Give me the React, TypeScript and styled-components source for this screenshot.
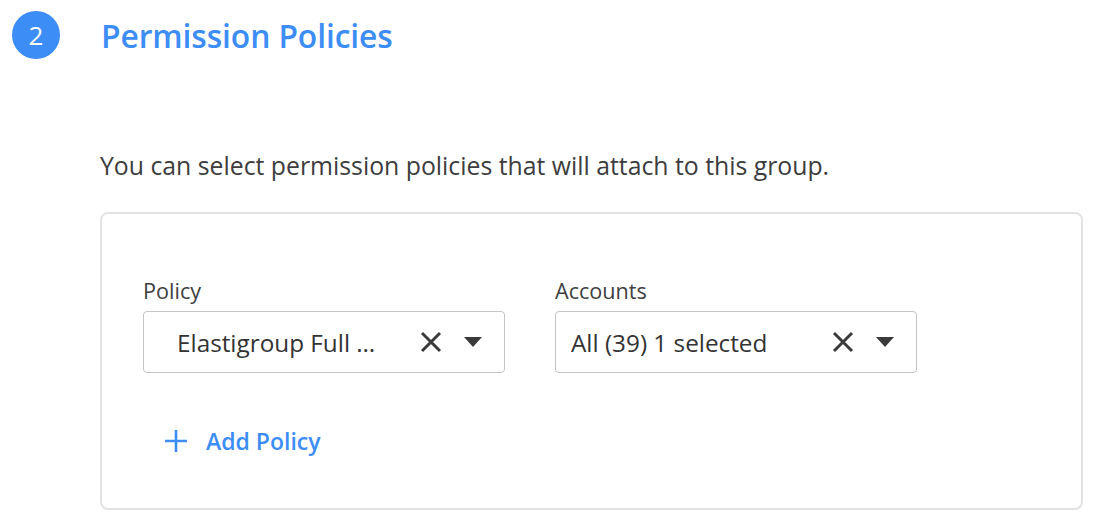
import * as React from 'react';
import styled, { createGlobalStyle } from 'styled-components';

const GlobalStyle = createGlobalStyle`
  html, body {
    margin: 0;
    padding: 0;
    background: #ffffff;
  }

  body {
    font-family: "Open Sans", Lato, "Liberation Sans", sans-serif;
    color: #3a3a3a;
  }
`;

const Page = styled.div`
  width: 1094px;
  height: 522px;
  overflow: hidden;
  box-sizing: border-box;
  padding: 11px 0 0 12px;
`;

const StepHeader = styled.div`
  display: flex;
  align-items: center;
  gap: 41px;
  height: 48px;
`;

const StepBadge = styled.div`
  width: 48px;
  height: 48px;
  border-radius: 50%;
  background-color: #3c8df5;
  color: #ffffff;
  display: flex;
  align-items: center;
  justify-content: center;
  font-size: 26px;
  font-weight: 400;
`;

const StepTitle = styled.h2`
  margin: 0;
  color: #3c8df5;
  font-size: 31.8px;
  font-weight: 600;
  letter-spacing: -0.1px;
`;

const StepBody = styled.div`
  margin-left: 88px;
`;

const Description = styled.p`
  margin: 90px 0 0;
  font-size: 24.8px;
  line-height: 32px;
  color: #3d3d3d;
`;

const Card = styled.div`
  margin-top: 31px;
  width: 983px;
  height: 298px;
  box-sizing: border-box;
  border: 2px solid #e3e3e3;
  border-radius: 8px;
  padding: 64px 0 0 41px;
`;

const FieldRow = styled.div`
  display: flex;
  gap: 50px;
`;

const Field = styled.div`
  display: flex;
  flex-direction: column;
  width: 362px;
`;

const FieldLabel = styled.label`
  font-size: 21.6px;
  line-height: 26px;
  color: #404040;
  margin-bottom: 7px;
`;

const SelectBox = styled.div<{ $inset: number }>`
  height: 62px;
  box-sizing: border-box;
  border: 1.5px solid #c4c4c4;
  border-radius: 4px;
  display: flex;
  align-items: center;
  padding: 0 21px 0 ${({ $inset }) => $inset}px;
`;

const SelectValue = styled.span`
  flex: 1;
  font-size: 24.3px;
  color: #333333;
  white-space: nowrap;
  overflow: hidden;
`;

const IconButton = styled.span<{ $gap: number }>`
  display: flex;
  align-items: center;
  justify-content: center;
  margin-left: ${({ $gap }) => $gap}px;
`;

const AddButton = styled.button`
  margin: 52px 0 0 22px;
  padding: 0;
  border: none;
  background: none;
  display: flex;
  align-items: center;
  gap: 19px;
  color: #3c8df5;
  font-family: inherit;
  font-size: 23px;
  font-weight: 600;
  cursor: pointer;
`;

const ClearIcon = () => (
  <svg width="22" height="22" viewBox="0 0 22 22">
    <path d="M2 2 L20 20 M20 2 L2 20" stroke="#3a3a3a" strokeWidth="3" strokeLinecap="butt" />
  </svg>
);

const CaretIcon = () => (
  <svg width="20" height="10" viewBox="0 0 20 10">
    <path d="M1 0 H19 L10 10 Z" fill="#3a3a3a" />
  </svg>
);

const PlusIcon = () => (
  <svg width="22" height="22" viewBox="0 0 22 22">
    <path d="M11 0 V22 M0 11 H22" stroke="#3c8df5" strokeWidth="2.6" />
  </svg>
);

interface IPolicySelectProps {
  label: string;
  value: string;
  inset: number;
}

const PolicySelect = ({ label, value, inset }: IPolicySelectProps): React.ReactElement => (
  <Field>
    <FieldLabel>{label}</FieldLabel>
    <SelectBox $inset={inset}>
      <SelectValue>{value}</SelectValue>
      <IconButton $gap={0}>
        <ClearIcon />
      </IconButton>
      <IconButton $gap={21}>
        <CaretIcon />
      </IconButton>
    </SelectBox>
  </Field>
);

const App = (): React.ReactElement => (
  <>
    <GlobalStyle />
    <Page>
      <StepHeader>
        <StepBadge>2</StepBadge>
        <StepTitle>Permission Policies</StepTitle>
      </StepHeader>

      <StepBody>
        <Description>You can select permission policies that will attach to this group.</Description>

        <Card>
          <FieldRow>
            <PolicySelect label="Policy" value="Elastigroup Full …" inset={33} />
            <PolicySelect label="Accounts" value="All (39) 1 selected" inset={15} />
          </FieldRow>

          <AddButton type="button">
            <PlusIcon />
            Add Policy
          </AddButton>
        </Card>
      </StepBody>
    </Page>
  </>
);

export default App;
